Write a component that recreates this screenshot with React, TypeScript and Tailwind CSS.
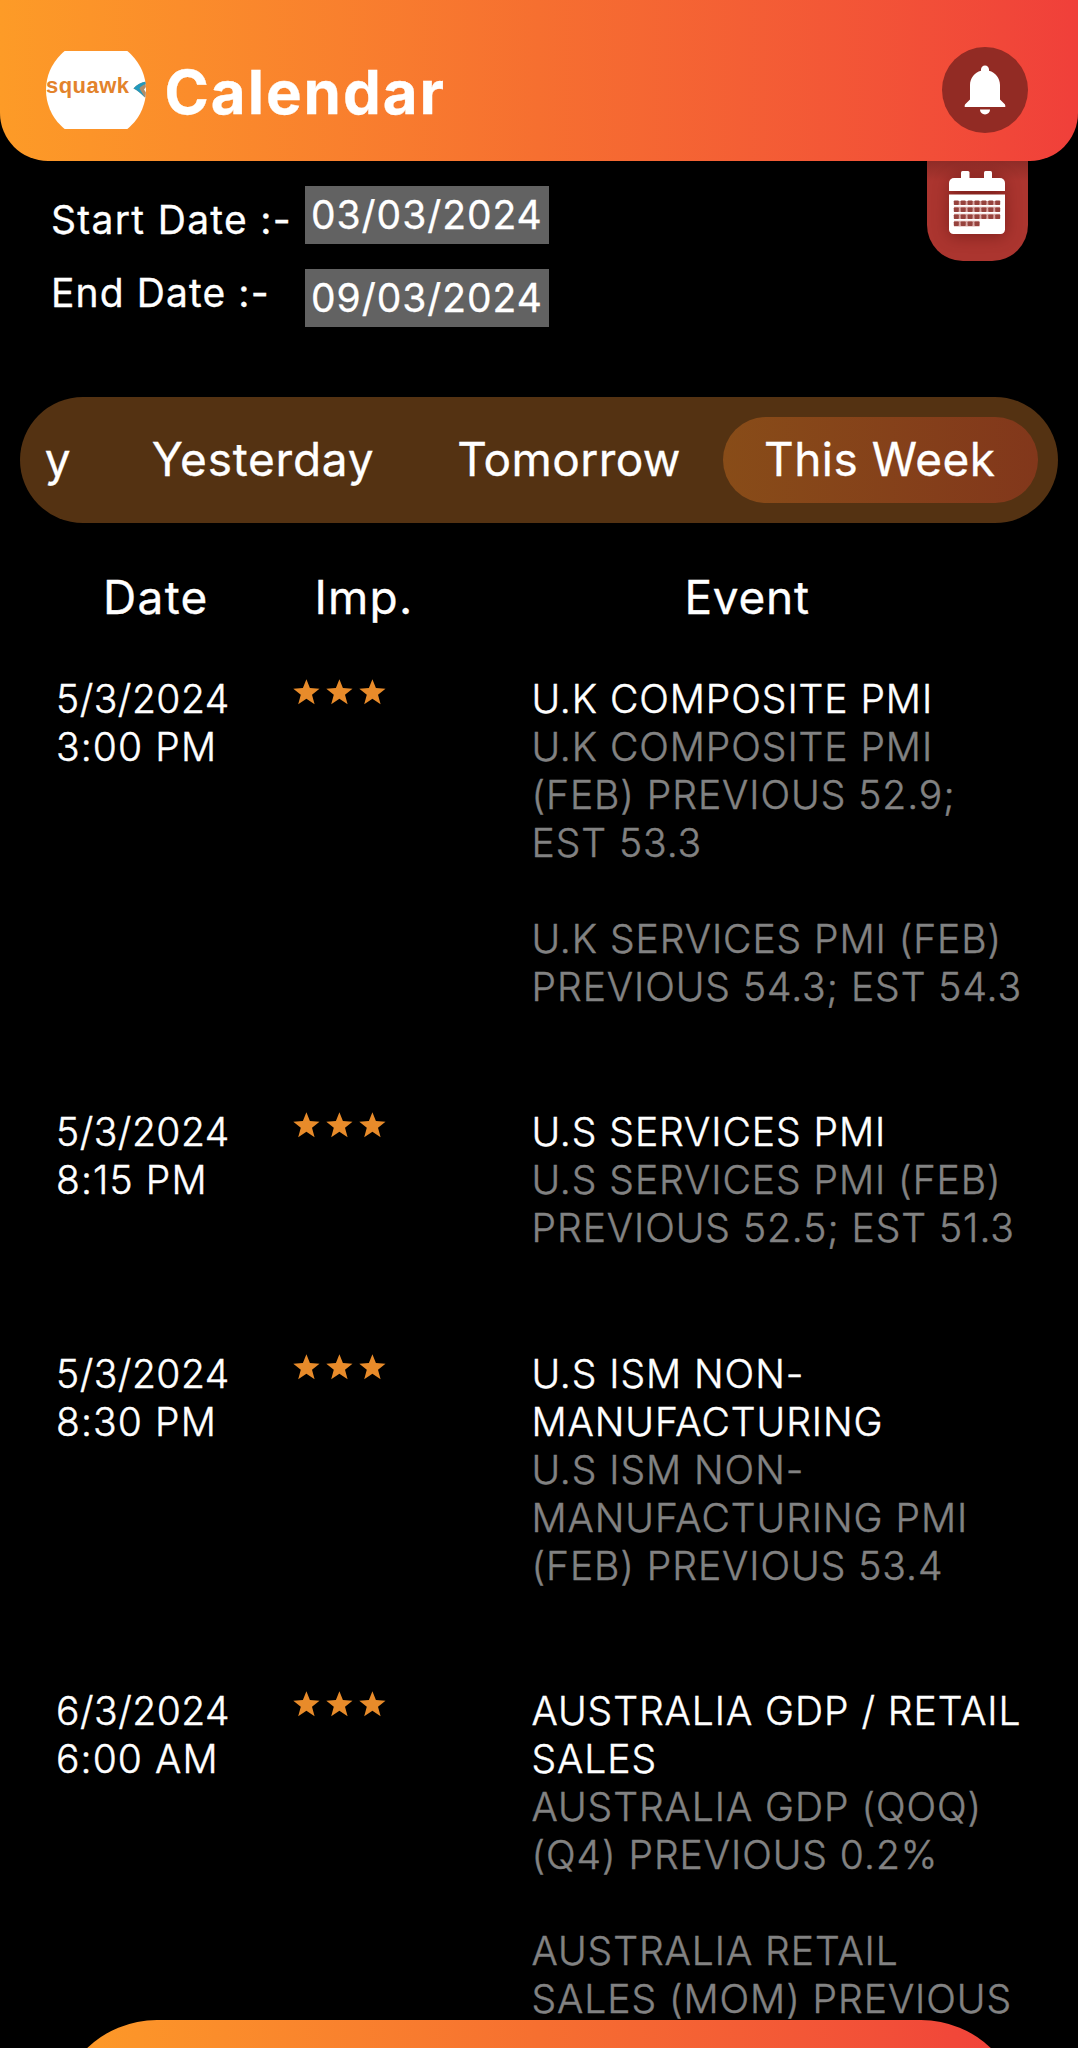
import { useState } from 'react';

/* -------------------- Types -------------------- */
type CalendarEvent = {
  id: number;
  date: string;
  time: string;
  importance: number;
  title: string;
  details: string;
};

type Tab = {
  label: string;
  className: string;
};

/* -------------------- Data -------------------- */
const TABS: Tab[] = [
  { label: 'Today', className: 'w-[222px] tracking-[2.8px]' },
  { label: 'Yesterday', className: 'w-[304px] tracking-[0.75px]' },
  { label: 'Tomorrow', className: 'w-[308px] tracking-[0.4px]' },
  { label: 'This Week', className: 'w-[315px] pr-[1.500px] tracking-[0.5px]' },
];

const EVENTS: CalendarEvent[] = [
  {
    id: 1,
    date: '5/3/2024',
    time: '3:00 PM',
    importance: 3,
    title: 'U.K COMPOSITE PMI',
    details:
      'U.K COMPOSITE PMI\n(FEB) PREVIOUS 52.9;\nEST 53.3\n\nU.K SERVICES PMI (FEB)\nPREVIOUS 54.3; EST 54.3',
  },
  {
    id: 2,
    date: '5/3/2024',
    time: '8:15 PM',
    importance: 3,
    title: 'U.S SERVICES PMI',
    details: 'U.S SERVICES PMI (FEB)\nPREVIOUS 52.5; EST 51.3',
  },
  {
    id: 3,
    date: '5/3/2024',
    time: '8:30 PM',
    importance: 3,
    title: 'U.S ISM NON-\nMANUFACTURING',
    details: 'U.S ISM NON-\nMANUFACTURING PMI\n(FEB) PREVIOUS 53.4',
  },
  {
    id: 4,
    date: '6/3/2024',
    time: '6:00 AM',
    importance: 3,
    title: 'AUSTRALIA GDP / RETAIL\nSALES',
    details:
      'AUSTRALIA GDP (QOQ)\n(Q4) PREVIOUS 0.2%\n\nAUSTRALIA RETAIL\nSALES (MOM) PREVIOUS',
  },
];

/* -------------------- Icons -------------------- */
const Logo = () => (
  <svg width="100" height="78" viewBox="0 0 100 78" className="shrink-0">
    <defs>
      <clipPath id="logo-clip">
        <circle cx="50" cy="39" r="50" />
      </clipPath>
    </defs>
    <g clipPath="url(#logo-clip)">
      <rect width="100" height="78" fill="#fff" />
      <text
        x="0"
        y="42"
        textLength="83"
        fontSize="22"
        fontWeight="700"
        fontFamily="'Liberation Sans', Arial, sans-serif"
        fill="#e3832c"
      >
        squawk
      </text>
      <path d="M100 30.500 Q92 32 87.500 37.500 Q92 39.500 99 46.500 L100 46 V41.500 L98 38.500 L100 36 Z" fill="#b08c68" />
      <path d="M100 30.500 Q92 32 87.500 37.500 Q92 39.500 99 46.500 Q95 40 93.500 37.500 Q95 34.500 100 33 Z" fill="#2299bd" />
    </g>
  </svg>
);

const BellIcon = () => (
  <svg width="42" height="50" viewBox="0 0 42 50" fill="#fff">
    <path d="M21 0.500c-2.400 0-4 1.700-4 4v1.200C10.500 7.600 6 13 6 20v14.500L1.200 39.300c-0.500 0.500-0.500 1.200-0.500 2.700h40.600c0-1.500 0-2.200-0.500-2.700L36 34.500V20c0-7-4.500-12.400-11-14.300V4.500c0-2.300-1.600-4-4-4z" />
    <path d="M16 44.500h10c0 2.800-2.200 4.900-5 4.900s-5-2.100-5-4.900z" />
  </svg>
);

const CalendarIcon = () => (
  <svg width="56" height="64" viewBox="0 0 56 64" className="drop-shadow-[0_2px_8px_rgba(60,0,0,0.4)]">
    <g fill="#fff">
      <rect x="12" y="0" width="8.500" height="12" rx="1.500" />
      <rect x="35" y="0" width="8" height="12" rx="1.500" />
      <path d="M5 7h46a5 5 0 0 1 5 5v8H0v-8a5 5 0 0 1 5-5z" />
      <path d="M0 23.500h56v35a4.500 4.500 0 0 1-4.500 4.500h-47A4.500 4.500 0 0 1 0 58.500z" />
    </g>
    <g fill="#d9a9a6">
      <rect x="5" y="30" width="46" height="18.500" />
      <rect x="5" y="48" width="25.500" height="7.500" />
    </g>
    <g fill="#96423d">
      {[0, 1, 2, 3].map((row) =>
        [0, 1, 2, 3, 4, 5, 6]
          .filter((col) => row < 3 || col < 4)
          .map((col) => (
            <rect
              key={`${row}-${col}`}
              x={4.8 + col * 6.9}
              y={29.5 + row * 7}
              width="5"
              height="4.500"
              rx="0.800"
            />
          ))
      )}
    </g>
    <path d="M4 34.900h48M4 41.900h48M4 48.900h48" stroke="#fff" strokeWidth="1.600" />
  </svg>
);

const Star = () => (
  <svg width="27" height="26" viewBox="0 0 27 26" fill="#e88b2a">
    <path d="M13.400 0.200L16.900 9.100L26.500 9.700L19 15.700L21.600 25.200L13.400 19.800L5.200 25.200L7.800 15.700L0.300 9.700L9.900 9.100Z" />
  </svg>
);

/* -------------------- Sections -------------------- */
const Header = () => (
  <header className="relative z-10 flex h-[160.5px] shrink-0 items-start justify-between rounded-b-[48px] bg-linear-to-r from-[#fd9b27] via-[#f66f30] to-[#f03f3a] pl-[45.500px] pr-[50px]">
    <div className="flex pt-[51px]">
      <Logo />
      <h1 className="ml-[19px] mt-[5px] text-[60px] font-bold leading-[72px] tracking-[1.97px] text-white">
        Calendar
      </h1>
    </div>
    <button className="mt-[47px] flex h-[86px] w-[86px] items-center justify-center rounded-full bg-[#922b24]">
      <BellIcon />
    </button>
  </header>
);

const DateRange = () => (
  <section className="flex h-[236.500px] shrink-0 items-start justify-between pl-[51px] pr-[50.500px] text-[39px] leading-[48px]">
    <div className="flex">
      <div className="w-[254px] pt-[35px]">
        <p className="whitespace-pre tracking-[1.3px]">Start Date :-</p>
        <p className="mt-[25px] whitespace-pre tracking-[1.1px]">End Date :-</p>
      </div>
      <div className="pt-[25.500px] tracking-[0.95px]">
        <div className="h-[57.500px] w-[244px] bg-[#626262] pl-[6px] pt-[4.500px]">03/03/2024</div>
        <div className="mt-[25.500px] h-[57.500px] w-[244px] bg-[#626262] pl-[6px] pt-[4.500px]">
          09/03/2024
        </div>
      </div>
    </div>
    <button className="flex h-[100.500px] w-[100.500px] justify-center rounded-b-[36px] bg-linear-to-b from-[#8f2c27] to-[#ab352f] to-20% pt-[10px]">
      <CalendarIcon />
    </button>
  </section>
);

const App = () => {
  const [active, setActive] = useState('This Week');

  return (
    <div className="relative flex h-[2048px] w-[1078px] flex-col overflow-hidden bg-black font-['Inter',sans-serif] text-white [-webkit-text-stroke:0.3px]">
      <Header />
      <DateRange />

      <nav className="mx-[20px] h-[126px] shrink-0 rounded-full bg-[#543212] px-[20px] pt-[20px]">
        <div className="flex justify-end overflow-hidden">
          {TABS.map((tab) => (
            <button
              key={tab.label}
              onClick={() => setActive(tab.label)}
              className={`h-[85.500px] shrink-0 rounded-full pb-[2.500px] text-[46px] leading-[56px] ${tab.className} ${
                active === tab.label ? 'bg-linear-to-r from-[#884c18] to-[#82371b]' : ''
              }`}
            >
              {tab.label}
            </button>
          ))}
        </div>
      </nav>

      <div className="flex shrink-0 pt-[46px] text-[46px] leading-[56px]">
        <div className="w-[211px] pl-[103px] tracking-[1.3px]">Date</div>
        <div className="w-[473.500px] pl-[103.500px] tracking-[1.2px]">Imp.</div>
        <div className="tracking-[0.7px]">Event</div>
      </div>

      <main className="shrink-0 pt-[49.500px] text-[39px] font-light leading-[48px] [-webkit-text-stroke:0.45px]">
        {EVENTS.map((event) => (
          <article key={event.id} className="flex pb-[97.600px] pl-[56px]">
            <div className="w-[237px]">
              <p className="tracking-[0.5px]">{event.date}</p>
              <p className="tracking-[1.1px]">{event.time}</p>
            </div>
            <div className="flex w-[238.500px] gap-[6px] pt-[4px]">
              {Array.from({ length: event.importance }, (_, i) => (
                <Star key={i} />
              ))}
            </div>
            <div className="whitespace-pre tracking-[0.95px]">
              <p>{event.title}</p>
              <p className="text-[#828282]">{event.details}</p>
            </div>
          </article>
        ))}
      </main>

      {/* bottom bar, only its upper edge is on screen */}
      <footer className="absolute left-[56px] top-[2020px] h-[202px] w-[966px] rounded-[101px] bg-linear-to-r from-[#fd9b27] via-[#f66f30] to-[#f03f3a]" />
    </div>
  );
};

export default App;
